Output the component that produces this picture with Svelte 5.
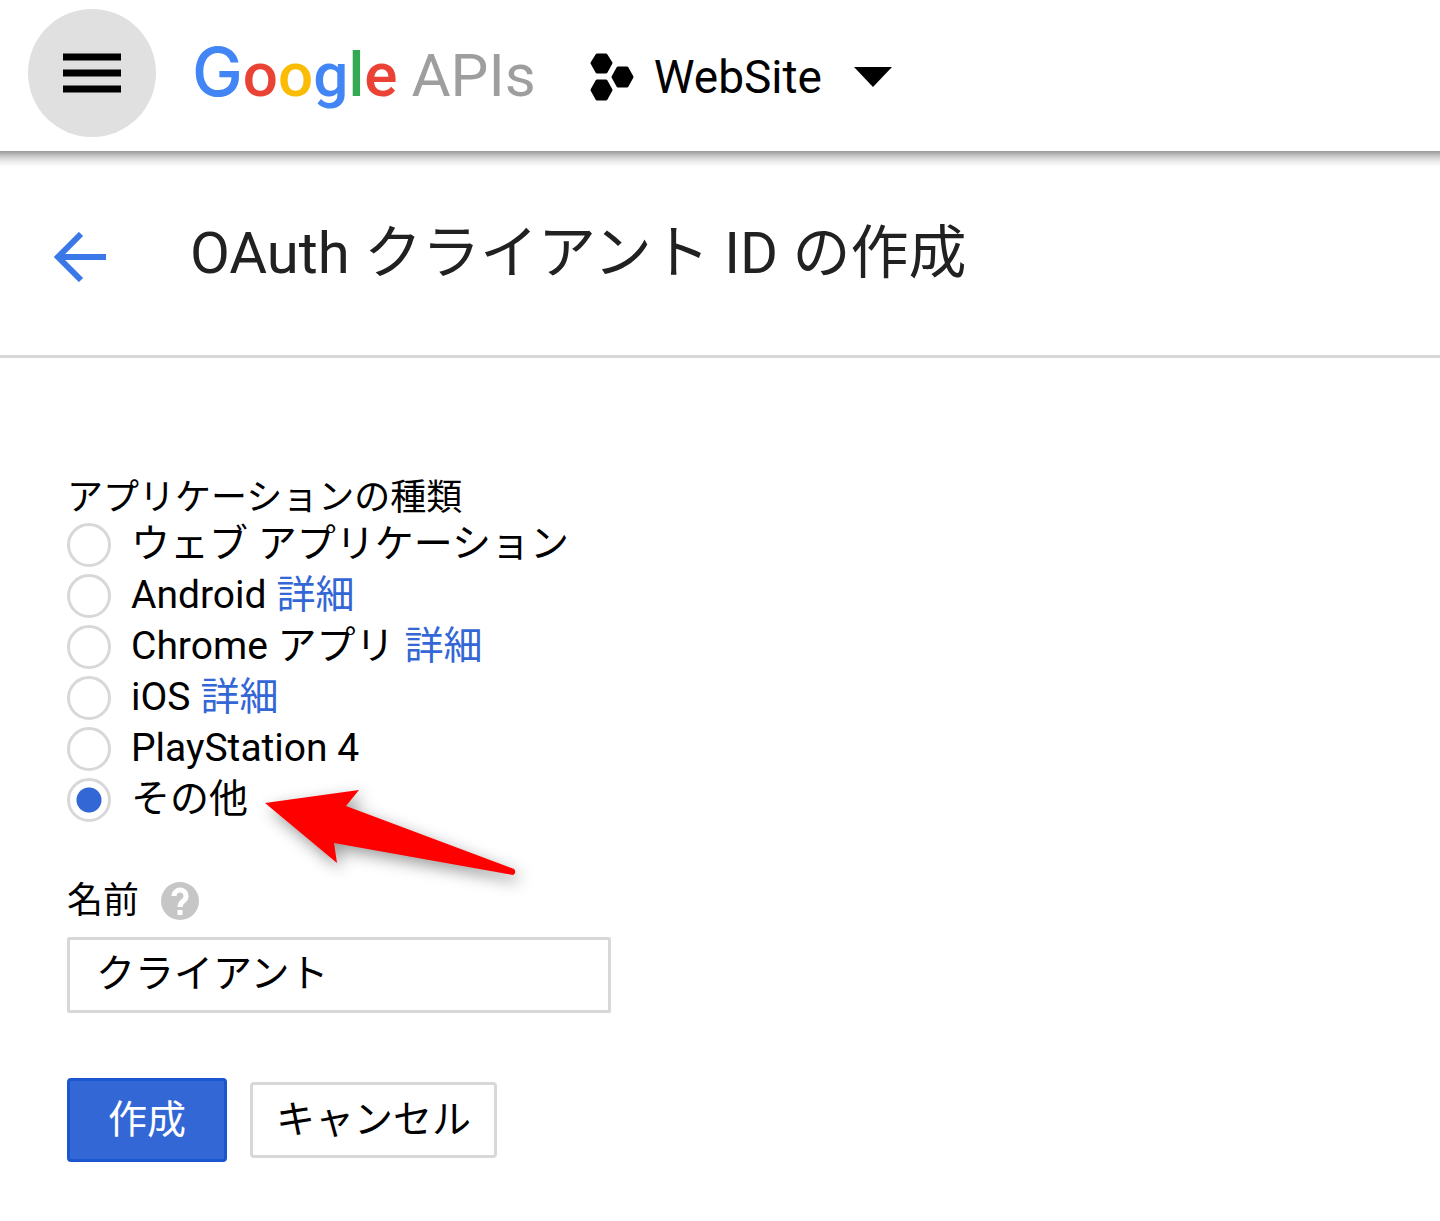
<script lang="ts">
  interface AppType {
    id: string
    label: string
    help?: string
  }

  const appTypes: AppType[] = [
    { id: 'web', label: 'ウェブ アプリケーション' },
    { id: 'android', label: 'Android', help: '#android' },
    { id: 'chrome', label: 'Chrome アプリ', help: '#chrome' },
    { id: 'ios', label: 'iOS', help: '#ios' },
    { id: 'ps4', label: 'PlayStation 4' },
    { id: 'other', label: 'その他' }
  ]

  let selected = $state('other')
  let name = $state('クライアント')
</script>

<header class="topbar">
  <button type="button" class="menu" aria-label="メニュー">
    <svg width="58" height="42" viewBox="0 0 58 42" aria-hidden="true">
      <path d="M0 5h58M0 21h58M0 37h58" stroke="#000" stroke-width="7" />
    </svg>
  </button>
  <a class="logo" href="#home">
    <span class="google"><span class="initial blue">G</span><span class="red">o</span><span class="yellow">o</span><span class="blue">g</span><span class="green">l</span><span class="red">e</span></span>
    <span class="apis">APIs</span>
  </a>
  <button type="button" class="project" aria-haspopup="true">
    <svg width="44" height="48" viewBox="0 0 44 48" aria-hidden="true">
      <path
        d="M7 2h9l5 8-5 9H7l-5-9zM28 15h9l5 9-5 9h-9l-5-9zM7 28h9l5 9-5 9H7l-5-9z"
        stroke="#000"
        stroke-width="3"
        stroke-linejoin="round"
      />
    </svg>
    <span>WebSite</span>
    <svg class="caret" width="38" height="20" viewBox="0 0 38 20" aria-hidden="true">
      <path d="M0 0h38L19 20z" />
    </svg>
  </button>
</header>

<div class="titlebar">
  <a class="back" href="#back" aria-label="戻る">
    <svg width="52" height="50" viewBox="0 0 52 50" aria-hidden="true">
      <path d="M27 2L4 25l23 23M4 25h48" fill="none" stroke="#3b78e7" stroke-width="6" />
    </svg>
  </a>
  <h1>OAuth クライアント ID の作成</h1>
</div>

<main>
  <form onsubmit={(e) => e.preventDefault()}>
    <fieldset>
      <legend>アプリケーションの種類</legend>
      {#each appTypes as type (type.id)}
        <div class="option">
          <input type="radio" id={type.id} name="app-type" value={type.id} bind:group={selected} />
          <label for={type.id}>{type.label}</label>
          {#if type.help}
            <a href={type.help}>詳細</a>
          {/if}
          {#if type.id === 'other'}
            <svg class="pointer" width="252" height="88" viewBox="0 0 252 88" aria-hidden="true">
              <path d="M0 14L94 1 81 17 249 80Q252 84 248 86L69 54 72 74z" fill="#f00" />
            </svg>
          {/if}
        </div>
      {/each}
    </fieldset>

    <div class="field-label">
      <label for="client-name">名前</label>
      <button type="button" class="help" aria-label="ヘルプ">
        <svg width="38" height="38" viewBox="0 0 38 38" aria-hidden="true">
          <circle cx="19" cy="19" r="19" fill="#c6c6c6" />
          <path
            d="M13 14a6 6 0 1 1 10 4.500c-2.500 2-4 3-4 6.500M19 28v5"
            fill="none"
            stroke="#fff"
            stroke-width="5"
          />
        </svg>
      </button>
    </div>
    <input class="text" type="text" id="client-name" bind:value={name} />

    <div class="actions">
      <button type="submit" class="primary">作成</button>
      <button type="button" class="secondary">キャンセル</button>
    </div>
  </form>
</main>

<style>
  :global(body) {
    background: #fff;
    color: #000;
    font-family: Roboto, 'Noto Sans CJK JP', sans-serif;
  }

  button,
  input {
    box-sizing: border-box;
    font-family: inherit;
    color: inherit;
  }

  button {
    padding: 0;
    border: none;
    background: none;
    cursor: pointer;
  }

  a {
    color: #3367d6;
    text-decoration: none;
  }

  svg {
    display: block;
  }

  .topbar {
    position: relative;
    display: flex;
    align-items: center;
    height: 151px;
    padding: 0 28px 5px;
    box-sizing: border-box;
  }

  /* full-bleed shadow, so it does not fade out at the window edges */
  .topbar::after {
    content: '';
    position: absolute;
    inset: 100% 0 auto;
    height: 16px;
    background: linear-gradient(#999, #ccc 35%, #f0f0f0 70%, #fff);
  }

  .menu {
    display: grid;
    place-items: center;
    width: 128px;
    height: 128px;
    border-radius: 50%;
    background: #e0e0e0;
  }

  .logo {
    display: flex;
    align-items: baseline;
    gap: 14px;
    margin-left: 36px;
    line-height: 80px;
  }

  .google {
    font-size: 62px;
    font-weight: 500;
  }

  .initial {
    font-family: Inter, sans-serif;
    font-size: 68px;
  }

  .apis {
    color: #9e9e9e;
    font-size: 60px;
  }

  .blue {
    color: #4285f4;
  }

  .red {
    color: #ea4335;
  }

  .yellow {
    color: #fbbc05;
  }

  .green {
    color: #34a853;
  }

  .project {
    display: flex;
    align-items: center;
    gap: 20px;
    margin-left: 54px;
    padding-top: 8px;
    font-size: 46px;
  }

  .caret {
    margin-left: 12px;
  }

  .titlebar {
    display: flex;
    align-items: center;
    gap: 84px;
    height: 204px;
    padding: 0 54px;
    border-bottom: 3px solid #d8d8d8;
  }

  .back {
    padding-top: 8px;
  }

  h1 {
    margin: 0;
    color: #212121;
    font-size: 58px;
    font-weight: 400;
    line-height: 72px;
  }

  main {
    padding: 119px 67px 60px;
  }

  fieldset {
    min-width: 0;
    margin: 0;
    padding: 0;
    border: none;
  }

  legend {
    padding: 0;
    font-size: 36px;
    line-height: 42px;
  }

  .option {
    position: relative;
    display: flex;
    align-items: center;
    height: 51px;
    font-size: 39px;
    line-height: 51px;
  }

  .option a {
    margin-left: 10px;
  }

  input[type='radio'] {
    appearance: none;
    width: 44px;
    height: 44px;
    margin: 0 20px 0 0;
    border: 3px solid #d8d8d8;
    border-radius: 50%;
  }

  input[type='radio']:checked {
    background: radial-gradient(circle, #3367d6 12px, #fff 13px);
  }

  .pointer {
    position: absolute;
    left: 198px;
    top: 15px;
    overflow: visible;
    filter: drop-shadow(4px 6px 8px rgba(0, 0, 0, 0.4));
  }

  .field-label {
    display: flex;
    align-items: center;
    gap: 22px;
    margin-top: 54px;
    font-size: 36px;
    line-height: 44px;
  }

  .text {
    display: block;
    width: 544px;
    max-width: 100%;
    height: 76px;
    margin-top: 14px;
    padding: 0 26px 10px;
    border: 3px solid #d8d8d8;
    border-radius: 2px;
    font-size: 39px;
  }

  .actions {
    display: flex;
    align-items: center;
    gap: 23px;
    margin-top: 65px;
  }

  .primary,
  .secondary {
    font-size: 39px;
    line-height: 58px;
    border-radius: 4px;
  }

  .primary {
    padding: 10px 38px;
    border: 3px solid #1a56cf;
    background: #3367d6;
    color: #fff;
  }

  .secondary {
    padding: 6px 23px;
    border: 3px solid #d8d8d8;
  }
</style>
